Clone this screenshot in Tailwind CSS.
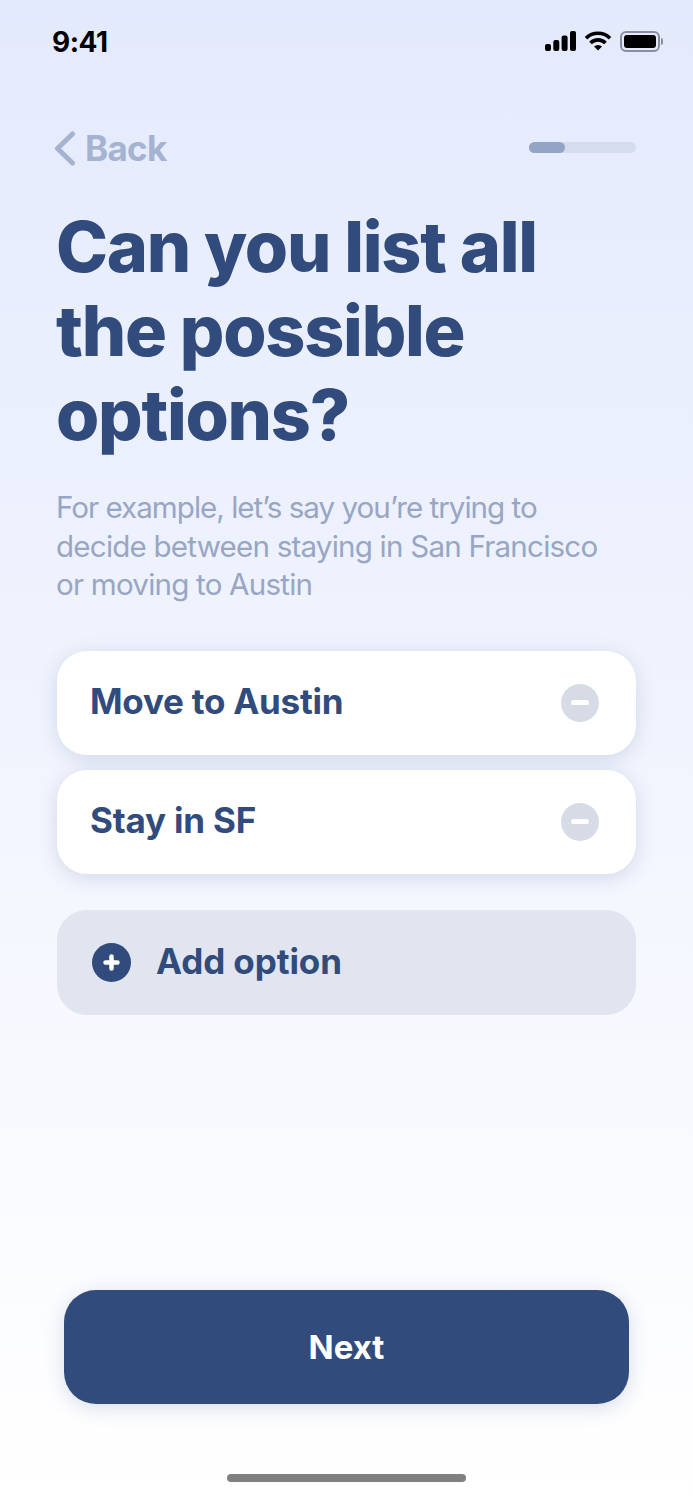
<!DOCTYPE html>
<html>
<head>
  <meta name="viewport" content="width=device-width, initial-scale=1.0" />
  <title>Options</title>
  <script src="https://cdn.jsdelivr.net/npm/@tailwindcss/browser@4"></script>
</head>
<body class="font-['Inter',sans-serif]">
  <div class="w-[693px] h-[1500px] flex flex-col overflow-hidden bg-gradient-to-b from-[#e4eafd] to-white">

    <!-- status bar -->
    <div class="h-[82px] shrink-0 pl-[52px] pr-[30px] flex items-center justify-between">
      <span class="pt-[2px] text-[28px] font-bold text-black tracking-[-0.5px]">9:41</span>
      <div class="flex items-center gap-[8px]">
        <svg class="w-[31px] h-[20px]" viewBox="0 0 31 20" fill="#000">
          <rect x="0" y="13" width="6" height="7" rx="2" />
          <rect x="8.3" y="9" width="6" height="11" rx="2" />
          <rect x="16.6" y="4.5" width="6" height="15.5" rx="2" />
          <rect x="25" y="0" width="6" height="20" rx="2" />
        </svg>
        <svg class="w-[28px] h-[20px]" viewBox="0 0 27 20" fill="none" stroke="#000" stroke-width="3.6">
          <path d="M1.5 7.2a17 17 0 0 1 24 0" />
          <path d="M6 12a10.6 10.6 0 0 1 15 0" />
          <path d="M13.5 19.6l-4-4a5.7 5.7 0 0 1 8 0z" fill="#000" stroke="none" />
        </svg>
        <div class="flex items-center">
          <div class="w-[40px] h-[21px] rounded-[6px] border-2 border-[#8b8f9b] p-[2px]">
            <div class="w-full h-full rounded-[3px] bg-black"></div>
          </div>
          <div class="w-[2px] h-[7px] ml-[1px] rounded-r-full bg-[#8b8f9b]"></div>
        </div>
      </div>
    </div>

    <!-- nav row -->
    <div class="mt-[39px] h-[54px] shrink-0 pl-[54px] pr-[57px] flex items-center justify-between">
      <div class="flex items-center gap-[9px]">
        <svg class="w-[22px] h-[35px]" viewBox="0 0 22 35" fill="none" stroke="#a5b3d0" stroke-width="5" stroke-linecap="round" stroke-linejoin="round">
          <path d="M18.5 3 3.5 17.5l15 14.5" />
        </svg>
        <span class="text-[35px] font-bold text-[#a5b3d0] tracking-[-0.7px]">Back</span>
      </div>
      <div class="mb-[2px] w-[107px] h-[11px] rounded-full bg-[#d5dcee]">
        <div class="w-[36px] h-full rounded-full bg-[#93a4c5]"></div>
      </div>
    </div>

    <!-- heading -->
    <div class="px-[57px]">
      <h1 class="mt-[30px] -ml-[1px] text-[70px] leading-[84px] font-extrabold text-[#314c7c] tracking-[-1.25px]">Can you list all<br />the possible<br />options?</h1>
      <p class="mt-[31px] -ml-[1px] text-[29.6px] leading-[38.5px] text-[#98a6c4] tracking-[-0.8px]"><span class="tracking-[-1px]">For example, let’s say you’re trying to</span><br />decide between staying in San Francisco<br />or moving to Austin</p>
    </div>

    <!-- options -->
    <div class="mt-[47px] px-[57px] flex flex-col">
      <div class="h-[104px] pl-[33px] pr-[37px] flex items-center justify-between rounded-[30px] bg-white shadow-[0_4px_20px_rgba(49,76,124,0.17)]">
        <span class="pb-[2px] text-[35px] font-bold text-[#314c7c] tracking-[-0.25px]">Move to Austin</span>
        <div class="w-[38px] h-[38px] rounded-full bg-[#d6dbe6] flex items-center justify-center">
          <div class="w-[18px] h-[5px] rounded-full bg-white"></div>
        </div>
      </div>
      <div class="mt-[15px] h-[104px] pl-[33px] pr-[37px] flex items-center justify-between rounded-[30px] bg-white shadow-[0_4px_20px_rgba(49,76,124,0.17)]">
        <span class="pb-[2px] text-[35px] font-bold text-[#314c7c] tracking-[-0.2px]">Stay in SF</span>
        <div class="w-[38px] h-[38px] rounded-full bg-[#d6dbe6] flex items-center justify-center">
          <div class="w-[18px] h-[5px] rounded-full bg-white"></div>
        </div>
      </div>
      <div class="mt-[36px] h-[105px] pl-[35px] flex items-center gap-[25px] rounded-[30px] bg-[#e1e5f0]">
        <svg class="w-[39px] h-[39px]" viewBox="0 0 39 39">
          <circle cx="19.5" cy="19.5" r="19.5" fill="#314c7c" />
          <path d="M19.5 13.5v12M13.5 19.5h12" stroke="#fff" stroke-width="4.5" stroke-linecap="round" />
        </svg>
        <span class="pb-[2px] text-[35px] font-bold text-[#314c7c] tracking-[-0.1px]">Add option</span>
      </div>
    </div>

    <!-- next button -->
    <div class="mt-auto px-[64px]">
      <button class="w-full h-[114px] pt-[1px] rounded-[32px] bg-[#314c7c] text-white text-[33px] font-bold shadow-[0_4px_20px_rgba(49,76,124,0.18)]">Next</button>
    </div>

    <!-- home indicator -->
    <div class="mt-[70px] mb-[18px] mx-auto w-[239px] h-[8px] rounded-full bg-[#808080]"></div>
  </div>
</body>
</html>
